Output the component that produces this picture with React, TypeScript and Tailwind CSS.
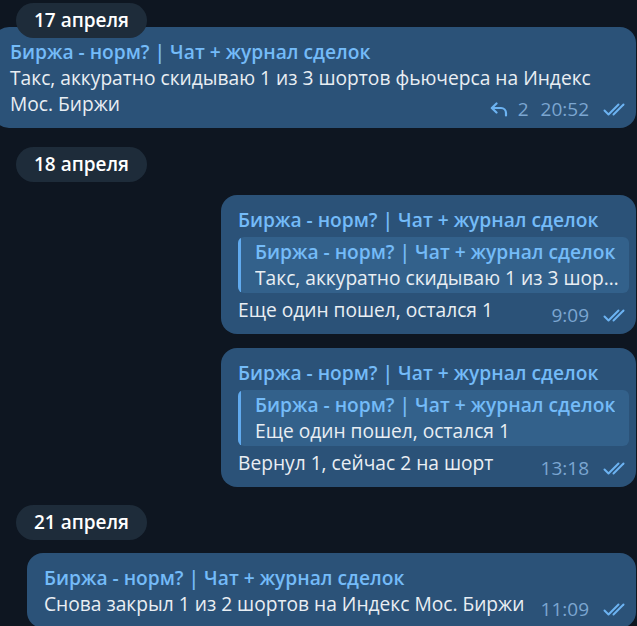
import React from 'react';

const font = { fontFamily: '"Open Sans", "Noto Sans", sans-serif' };

function Checks() {
  return (
    <svg width="26" height="13" viewBox="0 0 26 13" fill="none" className="shrink-0">
      <path d="M1.5 7.5 L5.5 11.5 L15.5 1.5" stroke="#6cb3f2" strokeWidth="2" strokeLinecap="round" strokeLinejoin="round" />
      <path d="M10.5 11.5 L20.5 1.5" stroke="#6cb3f2" strokeWidth="2" strokeLinecap="round" />
    </svg>
  );
}

function ReplyIcon() {
  return (
    <svg width="19" height="15" viewBox="0 0 19 15" fill="none" className="shrink-0">
      <path d="M6.5 1.5 L1.8 6 L6.5 10.5" stroke="#6cb3f2" strokeWidth="2.2" strokeLinecap="round" strokeLinejoin="round" />
      <path d="M2.5 6 H11 a5 5 0 0 1 5 5 V13.5" stroke="#6cb3f2" strokeWidth="2.2" strokeLinecap="round" />
    </svg>
  );
}

function Meta({ time, replies }: { time: string; replies?: number }) {
  return (
    <div className="relative top-[3px] flex items-center shrink-0 ml-3 text-[#7ba6d1] text-[19px] leading-[22px]">
      {replies !== undefined && (
        <>
          <ReplyIcon />
          <span className="ml-[9px] mr-[12px]">{replies}</span>
        </>
      )}
      <span>{time}</span>
      <span className="ml-[14px]">
        <Checks />
      </span>
    </div>
  );
}

function DatePill({ label }: { label: string }) {
  return (
    <div className="h-[35px] px-[18px] rounded-full bg-[#1e2c3a] text-white text-[19px] font-semibold flex items-center w-fit">
      {label}
    </div>
  );
}

function Reply({ text }: { text: string }) {
  return (
    <div className="mt-[4px] flex rounded-[6px] bg-[#33618b] overflow-hidden">
      <div className="w-[3px] bg-[#61aaee] shrink-0" />
      <div className="pl-[14px] pr-[9px] py-[2px] min-w-0">
        <div className="text-[#74bbf8] font-semibold leading-[26px] truncate">Биржа - норм? | Чат + журнал сделок</div>
        <div className="text-[#e9eef3] leading-[26px] truncate">{text}</div>
      </div>
    </div>
  );
}

function Bubble({
  className,
  lines,
  lastLine,
  reply,
  time,
  replies,
}: {
  className: string;
  lines?: string[];
  lastLine: string;
  reply?: string;
  time: string;
  replies?: number;
}) {
  return (
    <div className={`bg-[#2b5278] rounded-[16px] pl-[17px] pr-[7px] pt-[12px] pb-[11px] text-[19.2px] ${className}`}>
      <div className="text-[#74bbf8] font-semibold leading-[26px]">Биржа - норм? | Чат + журнал сделок</div>
      {reply && <Reply text={reply} />}
      <div className={reply ? 'mt-[4px]' : ''}>
        {lines?.map((l) => (
          <div key={l} className="text-[#e9eef3] leading-[26px]">
            {l}
          </div>
        ))}
        <div className="flex items-end justify-between">
          <span className="text-[#e9eef3] leading-[26px]">{lastLine}</span>
          <Meta time={time} replies={replies} />
        </div>
      </div>
    </div>
  );
}

export default function App() {
  return (
    <div className="relative w-[637px] h-[626px] overflow-hidden bg-[#0e1621]" style={font}>
      <div className="absolute left-[16px] top-[3px] z-10">
        <DatePill label="17 апреля" />
      </div>
      <div className="flex flex-col pt-[27px] pr-[1px]">
        <Bubble
          className="ml-[-7px] pb-[11px]"
          lines={['Такс, аккуратно скидываю 1 из 3 шортов фьючерса на Индекс']}
          lastLine="Мос. Биржи"
          time="20:52"
          replies={2}
        />
        <div className="mt-[19px] ml-[16px]">
          <DatePill label="18 апреля" />
        </div>
        <div className="mt-[13px] flex justify-end">
          <Bubble
            className="w-[415px] pb-[10px]"
            reply="Такс, аккуратно скидываю 1 из 3 шортов фьючерса на Индекс Мос. Биржи"
            lastLine="Еще один пошел, остался 1"
            time="9:09"
          />
        </div>
        <div className="mt-[14px] flex justify-end">
          <Bubble
            className="w-[415px]"
            reply="Еще один пошел, остался 1"
            lastLine="Вернул 1, сейчас 2 на шорт"
            time="13:18"
          />
        </div>
        <div className="mt-[18px] ml-[16px]">
          <DatePill label="21 апреля" />
        </div>
        <div className="mt-[13px] flex justify-end">
          <Bubble
            className="w-[609px]"
            lastLine="Снова закрыл 1 из 2 шортов на Индекс Мос. Биржи"
            time="11:09"
          />
        </div>
      </div>
    </div>
  );
}
